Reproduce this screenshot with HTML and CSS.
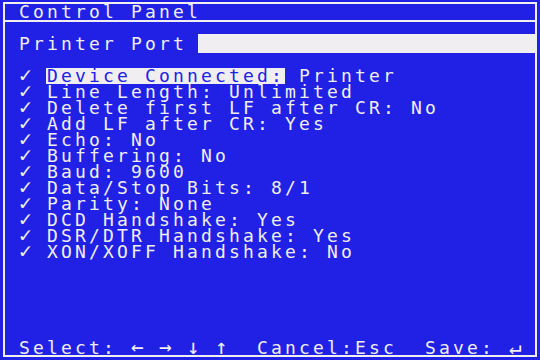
FILE: index.html
```html
<!DOCTYPE html>
<html lang="en">
  <head>
    <meta charset="utf-8">
    <meta name="viewport" content="width=device-width, initial-scale=1">
    <title>Control Panel</title>
    <link rel="stylesheet" href="styles.css">
  </head>

  <body>
    <div class="screen">
      <div class="title">Control Panel</div>

      <div class="tab">
        <span class="tab-label">Printer Port</span>
        <span class="tab-fill"></span>
      </div>

      <ul class="options">
        <li><span class="glyph">✓</span> <span class="inverse">Device Connected:</span> Printer</li>
        <li><span class="glyph">✓</span> Line Length: Unlimited</li>
        <li><span class="glyph">✓</span> Delete first LF after CR: No</li>
        <li><span class="glyph">✓</span> Add LF after CR: Yes</li>
        <li><span class="glyph">✓</span> Echo: No</li>
        <li><span class="glyph">✓</span> Buffering: No</li>
        <li><span class="glyph">✓</span> Baud: 9600</li>
        <li><span class="glyph">✓</span> Data/Stop Bits: 8/1</li>
        <li><span class="glyph">✓</span> Parity: None</li>
        <li><span class="glyph">✓</span> DCD Handshake: Yes</li>
        <li><span class="glyph">✓</span> DSR/DTR Handshake: Yes</li>
        <li><span class="glyph">✓</span> XON/XOFF Handshake: No</li>
      </ul>

      <div class="footer">Select: <span class="glyph">←</span> <span class="glyph">→</span> <span class="glyph">↓</span> <span class="glyph">↑</span>  Cancel:Esc  Save: <span class="glyph">↵</span></div>
    </div>
  </body>
</html>
```

FILE: styles.css
```css
body {
  margin: 0;
  background-color: #2121e6;
  color: #f0eef0;
  font-family: "DejaVu Sans Mono", monospace;
  font-size: 18px;
  line-height: 16px;
  letter-spacing: 3.16px;
}

.screen {
  margin: 2px 3px 0;
  height: 351px;
  border: 2px solid #f0eef0;
  display: flex;
  flex-direction: column;
}

.title {
  height: 16px;
  padding-left: 14px;
  border-bottom: 2px solid #f0eef0;
}

.tab {
  display: flex;
  margin-top: 12px;
  height: 19px;
  line-height: 19px;
}

.tab-label {
  padding: 0 11px 0 14px;
  white-space: pre;
}

.tab-fill {
  flex: 1;
  background-color: #f0eef0;
}

.options {
  list-style: none;
  margin: 14px 0 0;
  padding: 0 0 0 14px;
}

.options li {
  height: 16px;
  white-space: pre;
}

/* wider symbols, kept on the 14px character grid */
.glyph {
  font-size: 21px;
  letter-spacing: 1.36px;
}

.inverse {
  display: inline-block;
  height: 16px;
  margin-left: -1px;
  padding-left: 1px;
  background-color: #f0eef0;
  color: #2121e6;
}

.footer {
  margin-top: auto;
  height: 16px;
  padding-left: 14px;
  white-space: pre;
}
```
